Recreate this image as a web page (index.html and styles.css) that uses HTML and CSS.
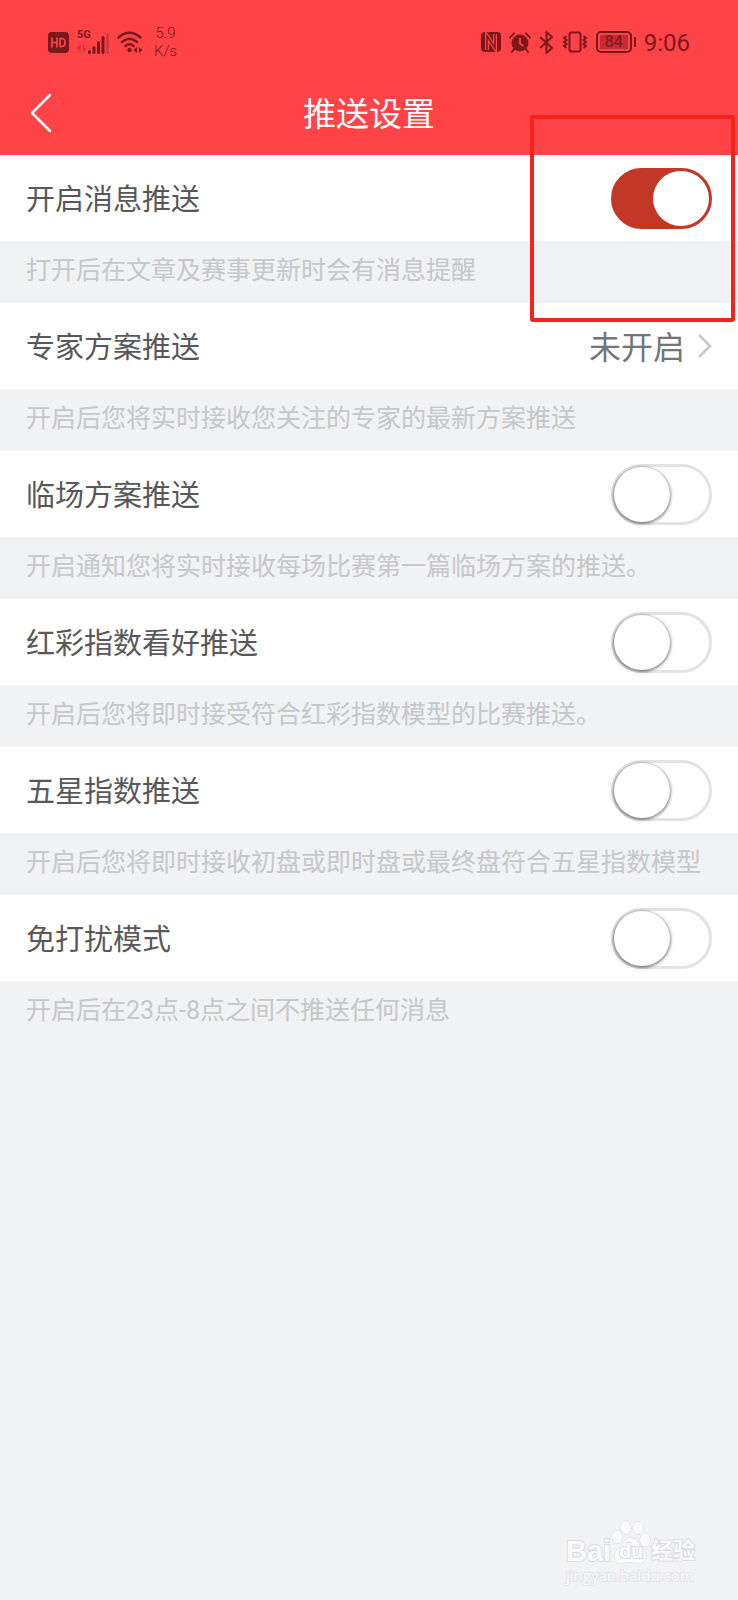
FILE: index.html
```html
<!DOCTYPE html>
<html lang="zh-CN">
  <head>
    <meta charset="UTF-8" />
    <meta name="viewport" content="width=device-width, initial-scale=1.0" />
    <title>推送设置</title>
    <link rel="stylesheet" href="styles.css">
  </head>
  <body>
    <header class="header">
      <div class="status flex v-center space-between">
        <div class="status-group flex v-center">
          <svg width="21" height="21" viewBox="0 0 21 21">
            <rect width="21" height="21" rx="4" fill="currentColor" />
            <path d="M4 5.500v10M9 5.500v10M4 10.500h5M12 6.500v8h1.500q3.500 0 3.500-4t-3.500-4z" fill="none" stroke="#ff4347" stroke-width="1.700" />
          </svg>
          <div class="signal">
            <span class="signal-type">5G</span>
            <svg width="32" height="23" viewBox="0 0 32 23">
              <path d="M3 21v-6l-2.500 3M6.500 14v6l2.500-3" fill="none" stroke="currentColor" stroke-width="1.500" opacity=".35" />
              <path d="M12.500 21.500v-1M17 21.500v-5M21.500 21.500v-10M26 21.500v-15" stroke="currentColor" stroke-width="3" stroke-linecap="round" />
              <path d="M30.500 21.500v-18" stroke="currentColor" stroke-width="3" stroke-linecap="round" opacity=".3" />
            </svg>
          </div>
          <svg width="26" height="23" viewBox="0 0 26 23">
            <path d="M1.500 6.500q11-9.500 22 0M5 11q7.500-6.500 15 0M8.500 15q4-3.500 8 0" fill="none" stroke="currentColor" stroke-width="2.500" stroke-linecap="round" />
            <circle cx="12.500" cy="19" r="2.200" fill="currentColor" />
            <path d="M20 16v6l-3.500-3zM22 16v6l3.500-3z" fill="currentColor" />
          </svg>
          <div class="speed">5.9<br>K/s</div>
        </div>
        <div class="status-group flex v-center">
          <svg width="20" height="20" viewBox="0 0 20 20">
            <rect width="20" height="20" rx="4" fill="currentColor" />
            <path d="M6 18V4l8 12V2" fill="none" stroke="#ff4347" stroke-width="4" />
            <path d="M6 18V4l8 12V2" fill="none" stroke="currentColor" stroke-width="1.500" />
          </svg>
          <svg width="22" height="21" viewBox="0 0 22 21">
            <circle cx="11" cy="11" r="8.500" fill="currentColor" />
            <path d="M1 5.500l4-4M21 5.500l-4-4M5 17l-2 3M17 17l2 3" stroke="currentColor" stroke-width="2" stroke-linecap="round" />
            <path d="M11 6v5.500l3.500 2.500" fill="none" stroke="#ff4347" stroke-width="1.800" />
          </svg>
          <svg width="15" height="23" viewBox="0 0 15 23">
            <path d="M1 6l12 11-5.500 5V1L13 6 1 17" fill="none" stroke="currentColor" stroke-width="2" stroke-linejoin="round" />
          </svg>
          <svg width="26" height="22" viewBox="0 0 26 22">
            <rect x="7.500" y="1.500" width="11" height="19" rx="2" fill="none" stroke="currentColor" stroke-width="2" />
            <path d="M4.500 5L2 7l2.500 2L2 11l2.500 2L2 15l2.500 2M21.500 5L24 7l-2.500 2 2.500 2-2.500 2 2.500 2-2.500 2" fill="none" stroke="currentColor" stroke-width="2" />
          </svg>
          <div class="battery flex v-center"><span class="battery-level">84</span></div>
          <time class="clock">9:06</time>
        </div>
      </div>
      <nav class="nav">
        <button class="back" aria-label="返回">
          <svg width="22" height="40" viewBox="0 0 22 40">
            <path d="M20 2L2 20l18 18" fill="none" stroke="currentColor" stroke-width="2.500" stroke-linecap="round" stroke-linejoin="round" />
          </svg>
        </button>
        <h1 class="title">推送设置</h1>
      </nav>
    </header>
    <main>
      <section>
        <div class="row flex v-center space-between">
          <label class="name" for="push">开启消息推送</label>
          <input class="switch" type="checkbox" id="push" checked>
        </div>
        <p class="note">打开后在文章及赛事更新时会有消息提醒</p>
      </section>
      <section>
        <a class="row flex v-center space-between" href="#">
          <span class="name">专家方案推送</span>
          <span class="value flex v-center">
            <span class="name">未开启</span>
            <svg width="15" height="24" viewBox="0 0 15 24">
              <path d="M2 1l11 11L2 23" fill="none" stroke="#c8c8cb" stroke-width="2.500" />
            </svg>
          </span>
        </a>
        <p class="note">开启后您将实时接收您关注的专家的最新方案推送</p>
      </section>
      <section>
        <div class="row flex v-center space-between">
          <label class="name" for="live">临场方案推送</label>
          <input class="switch" type="checkbox" id="live">
        </div>
        <p class="note">开启通知您将实时接收每场比赛第一篇临场方案的推送。</p>
      </section>
      <section>
        <div class="row flex v-center space-between">
          <label class="name" for="index">红彩指数看好推送</label>
          <input class="switch" type="checkbox" id="index">
        </div>
        <p class="note">开启后您将即时接受符合红彩指数模型的比赛推送。</p>
      </section>
      <section>
        <div class="row flex v-center space-between">
          <label class="name" for="star">五星指数推送</label>
          <input class="switch" type="checkbox" id="star">
        </div>
        <p class="note">开启后您将即时接收初盘或即时盘或最终盘符合五星指数模型</p>
      </section>
      <section>
        <div class="row flex v-center space-between">
          <label class="name" for="quiet">免打扰模式</label>
          <input class="switch" type="checkbox" id="quiet">
        </div>
        <p class="note">开启后在23点-8点之间不推送任何消息</p>
      </section>
    </main>
    <footer class="watermark">
      <div class="brand flex">
        <span class="brand-name">Bai</span>
        <span class="paw">
          <svg width="40" height="44" viewBox="0 0 40 44">
            <g fill="#fafafb" stroke="#dcdde0">
              <ellipse cx="6" cy="17" rx="5" ry="6.500" />
              <ellipse cx="15" cy="7.500" rx="5" ry="6.500" />
              <ellipse cx="27" cy="8" rx="5" ry="6.500" />
              <ellipse cx="34" cy="20" rx="5" ry="6.500" />
              <path d="M20 18c5 0 7 5 11 9 7 7 5 16-3 16-4 0-5-1-8-1s-5 1-9 1c-8 0-10-9-3-15 5-5 7-10 12-10z" />
            </g>
          </svg>
          <span class="paw-text">du</span>
        </span>
        <span class="brand-cn">经验</span>
      </div>
      <div class="site">jingyan.baidu.com</div>
    </footer>
    <div class="highlight"></div>
  </body>
</html>
```

FILE: styles.css
```css
*,
*::before,
*::after {
  box-sizing: border-box;
}
:root {
  --clr-red: #ff4347;
  --clr-status: #7c171c;
  --clr-page: #f1f2f4;
  --clr-text: #58585a;
  --clr-note: #c6c7c9;
  --ff-base: Roboto, "Noto Sans CJK SC", sans-serif;
}
body {
  position: relative;
  display: flex;
  flex-direction: column;
  min-height: 100vh;
  margin: 0;
  font-family: var(--ff-base);
  color: var(--clr-text);
  background-color: var(--clr-page);
}
svg {
  display: block;
  flex: none;
}
.flex {
  display: flex;
}
.v-center {
  align-items: center;
}
.space-between {
  justify-content: space-between;
}

/* header */
.header {
  padding-bottom: 13px;
  background-color: var(--clr-red);
}
.status {
  height: 84px;
  padding: 0 48px;
  color: var(--clr-status);
}
.status-group {
  gap: 8px;
}
.signal {
  position: relative;
}
.signal-type {
  position: absolute;
  top: -2px;
  left: 0;
  font-size: 11px;
  line-height: 12px;
  font-weight: 700;
}
.speed {
  padding-left: 3px;
  font-size: 15px;
  line-height: 18px;
  font-weight: 300;
  text-align: center;
}
.battery {
  position: relative;
  width: 36px;
  height: 22px;
  margin-right: 4px;
  padding: 2px;
  border: 2px solid;
  border-radius: 5px;
}
.battery::after {
  content: "";
  position: absolute;
  right: -6px;
  width: 2px;
  height: 10px;
  background-color: currentColor;
}
.battery-level {
  flex: 1;
  background-color: #c42c33;
  font-size: 16px;
  line-height: 14px;
  text-align: center;
}
.clock {
  padding-top: 2px;
  font-size: 24px;
  line-height: 28px;
}
.nav {
  display: grid;
  grid-template-columns: 60px 1fr 60px;
  align-items: center;
  height: 58px;
  color: #fff;
}
.back {
  padding: 0 0 0 30px;
  border: 0;
  color: inherit;
  background: none;
}
.title {
  margin: 0;
  padding-top: 4px;
  font-size: 33px;
  line-height: 48px;
  font-weight: 400;
  text-align: center;
}

/* settings */
.row {
  height: 86px;
  padding: 0 26px;
  font-size: 29px;
  line-height: 42px;
  color: inherit;
  background-color: #fff;
  text-decoration: none;
}
.name {
  padding-top: 4px;
}
.note {
  margin: 0;
  padding: 12px 26px 14px;
  font-size: 25px;
  line-height: 36px;
  color: var(--clr-note);
}
.value {
  gap: 12px;
  font-size: 32px;
  color: #757577;
}
.switch {
  appearance: none;
  flex: none;
  width: 101px;
  height: 61px;
  margin: 0;
  border: 3px solid #e3e3e4;
  border-radius: 31px;
  background-color: #fff;
}
.switch::before {
  content: "";
  display: block;
  width: 56px;
  height: 55px;
  border-radius: 50%;
  background-color: #fff;
  box-shadow: 0 1px 3px 1px rgba(0, 0, 0, 0.45);
}
.switch:checked {
  border-color: #c23725;
  background-color: #c23725;
}
.switch:checked::before {
  margin-left: auto;
  box-shadow: none;
}

/* watermark */
.watermark {
  width: 132px;
  margin: auto 40px 14px auto;
  color: #fafafb;
  -webkit-text-stroke: 2px #dcdde0;
  paint-order: stroke fill;
}
.brand {
  align-items: flex-end;
  height: 44px;
}
.brand-name {
  font-family: "Liberation Sans", sans-serif;
  font-size: 29px;
  line-height: 26px;
  font-weight: 700;
}
.paw {
  position: relative;
}
.paw-text {
  position: absolute;
  bottom: 1px;
  left: 0;
  width: 100%;
  font-size: 21px;
  line-height: 24px;
  font-weight: 700;
  text-align: center;
}
.brand-cn {
  font-size: 22px;
  line-height: 26px;
  font-weight: 700;
}
.site {
  font-family: "Open Sans", sans-serif;
  font-size: 15px;
  line-height: 22px;
  -webkit-text-stroke-color: #e4e5e8;
}

/* marks the main switch */
.highlight {
  position: absolute;
  top: 115px;
  right: 3px;
  width: 205px;
  height: 207px;
  border: 4px solid #f5231b;
  border-radius: 3px;
  pointer-events: none;
}
```
